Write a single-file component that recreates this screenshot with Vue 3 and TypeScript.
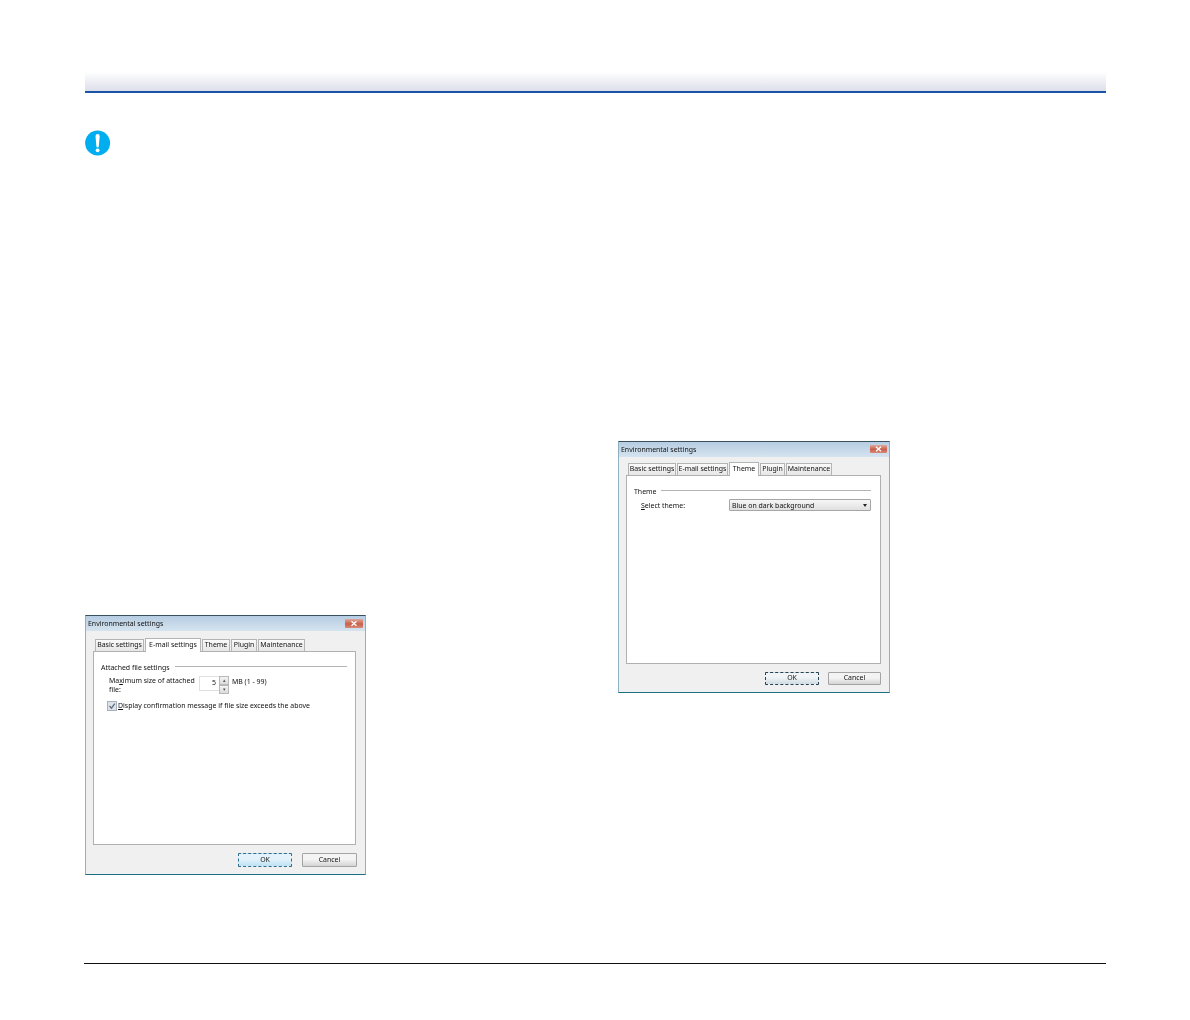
<script setup lang="ts">
interface Tab {
  label: string
  width: number
  active?: boolean
}

const emailTabs: Tab[] = [
  { label: 'Basic settings', width: 49 },
  { label: 'E-mail settings', width: 56, active: true },
  { label: 'Theme', width: 28 },
  { label: 'Plugin', width: 26 },
  { label: 'Maintenance', width: 47 }
]

const themeTabs: Tab[] = [
  { label: 'Basic settings', width: 48 },
  { label: 'E-mail settings', width: 51 },
  { label: 'Theme', width: 30, active: true },
  { label: 'Plugin', width: 25 },
  { label: 'Maintenance', width: 46 }
]
</script>

<template>
  <div class="page">
    <div class="top-band"></div>

    <div class="columns">
      <div class="col-left">
        <svg class="notice" viewBox="0 0 26 26" width="26" height="26">
          <circle cx="12.6" cy="13" r="12.5" fill="#00aeef" />
          <path d="M10.5 6.2a2.1 2.1 0 0 1 4.2 0l-.9 10a1.2 1.2 0 0 1-2.4 0z" fill="#fff" />
          <circle cx="12.6" cy="20.3" r="1.9" fill="#fff" />
        </svg>

        <div class="dialog dialog-email">
          <div class="titlebar">
            <span>Environmental settings</span>
            <span class="close">
              <svg viewBox="0 0 18 9" width="18" height="9"><path d="M6.5 2.2l5 4.6M11.5 2.2l-5 4.6" stroke="#fff" stroke-width="1.3" /></svg>
            </span>
          </div>
          <div class="body">
            <div class="tabs">
              <div
                v-for="tab in emailTabs"
                :key="tab.label"
                class="tab"
                :class="{ active: tab.active }"
                :style="{ width: tab.width + 'px' }"
              >{{ tab.label }}</div>
            </div>
            <div class="panel">
              <div class="group-title"><span>Attached file settings</span><i></i></div>
              <div class="size-row">
                <div class="size-label">Ma<u>x</u>imum size of attached<br />file:</div>
                <div class="spin-input">5</div>
                <div class="spin-btns"><b>▴</b><b>▾</b></div>
                <span class="unit">MB (1 - 99)</span>
              </div>
              <div class="check-row">
                <span class="check">
                  <svg viewBox="0 0 8 8" width="8" height="8"><path d="M1.5 4l2 2.2L6.7 1.6" fill="none" stroke="#5a6a80" stroke-width="1.2" /></svg>
                </span>
                <span><u>D</u>isplay confirmation message if file size exceeds the above</span>
              </div>
            </div>
            <div class="actions">
              <button class="btn ok">OK</button>
              <button class="btn">Cancel</button>
            </div>
          </div>
        </div>
      </div>

      <div class="col-right">
        <div class="dialog dialog-theme">
          <div class="titlebar">
            <span>Environmental settings</span>
            <span class="close">
              <svg viewBox="0 0 17 8" width="17" height="8"><path d="M6 1.7l5 4.6M11 1.7l-5 4.6" stroke="#fff" stroke-width="1.3" /></svg>
            </span>
          </div>
          <div class="body">
            <div class="tabs">
              <div
                v-for="tab in themeTabs"
                :key="tab.label"
                class="tab"
                :class="{ active: tab.active }"
                :style="{ width: tab.width + 'px' }"
              >{{ tab.label }}</div>
            </div>
            <div class="panel">
              <div class="group-title"><span>Theme</span><i></i></div>
              <div class="select-row">
                <span class="select-label"><u>S</u>elect theme:</span>
                <div class="select">
                  <span>Blue on dark background</span>
                  <em></em>
                </div>
              </div>
            </div>
            <div class="actions">
              <button class="btn ok dim">OK</button>
              <button class="btn">Cancel</button>
            </div>
          </div>
        </div>
      </div>
    </div>

    <div class="bottom-rule"></div>
  </div>
</template>

<style>
html,
body {
  margin: 0;
  background: #fff;
}
</style>

<style scoped>
.page {
  width: 1190px;
  height: 1020px;
  box-sizing: border-box;
  padding: 72px 84px 0 85px;
  background: #fff;
  font-family: "Noto Sans", "Liberation Sans", Arial, sans-serif;
}

.top-band {
  height: 19px;
  background: linear-gradient(#ffffff, #dcdfea);
  border-bottom: 2px solid #1c55a8;
}

.columns {
  display: grid;
  grid-template-columns: 533px 1fr;
  height: 870px;
}

.col-left {
  padding-top: 37px;
}

.notice {
  display: block;
  margin-bottom: 459px;
}

.col-right {
  padding-top: 348px;
}

.bottom-rule {
  height: 1px;
  margin-left: -1px;
  background: #111;
}

/* dialog window */
.dialog {
  box-sizing: border-box;
  display: flex;
  flex-direction: column;
  border: 1px solid #8fb0c0;
  border-top-color: #39505f;
  border-bottom-color: #1c6f80;
  font-size: 6.95px;
  color: #111;
  filter: blur(0.3px);
}

.dialog-email {
  width: 281px;
  height: 260px;
}

.dialog-theme {
  width: 272px;
  height: 252px;
}

.titlebar {
  display: flex;
  align-items: center;
  justify-content: space-between;
  height: 15px;
  flex: none;
  padding: 0 2px 1px 2px;
  box-sizing: border-box;
  background: linear-gradient(#b6cde2, #d5e3ef);
  color: #111;
}

.close {
  display: flex;
  align-self: flex-start;
  margin-top: 3px;
  border-radius: 1px;
  background: linear-gradient(#e0a89c, #c8604c 55%, #d88a78);
}

.body {
  flex: 1;
  display: flex;
  flex-direction: column;
  background: #f0f0f0;
}

.dialog-email .body {
  padding: 0 9px 0 7px;
}

.dialog-theme .body {
  padding: 0 8px 0 7px;
}

.tabs {
  display: flex;
  align-items: flex-end;
  gap: 1px;
  flex: none;
  height: 20px;
  padding-left: 2px;
}

.dialog-theme .tabs {
  height: 18px;
}

.tab {
  box-sizing: border-box;
  height: 12px;
  line-height: 10px;
  text-align: center;
  white-space: nowrap;
  border: 1px solid #b4b4b4;
  border-bottom: none;
  background: linear-gradient(#fafafa, #e6e6e6);
}

.tab.active {
  height: 14px;
  margin-bottom: -1px;
  position: relative;
  z-index: 1;
  line-height: 11px;
  background: #fff;
  border-color: #b4b4b4;
}

.panel {
  box-sizing: border-box;
  flex: 1;
  padding: 10px 8px 0 7px;
  background: #fff;
  border: 1px solid #b0b0b0;
}

.dialog-theme .panel {
  padding-right: 9px;
}

.group-title {
  display: flex;
  align-items: center;
  gap: 5px;
  height: 10px;
}

.group-title i {
  flex: 1;
  height: 1px;
  margin-top: -2px;
  background: #b4b4b4;
}

.size-row {
  display: flex;
  align-items: flex-start;
  margin: 5px 0 0 8px;
  line-height: 8.5px;
}

.size-label {
  width: 90px;
}

.spin-input {
  box-sizing: border-box;
  width: 20px;
  height: 15px;
  margin-top: -1px;
  padding: 2px 3px 0 0;
  text-align: right;
  border: 1px solid #e0e0e0;
  border-right: none;
}

.spin-btns {
  display: flex;
  flex-direction: column;
  width: 10px;
  margin-top: -1px;
  margin-right: 3px;
}

.spin-btns b {
  height: 7px;
  font-size: 5px;
  font-weight: normal;
  line-height: 7px;
  text-align: center;
  color: #555;
  border: 0.5px solid #b8b8b8;
  background: linear-gradient(#f4f4f4, #dcdcdc);
}

.unit {
  margin-top: 1px;
}

.check-row {
  display: flex;
  align-items: center;
  gap: 2px;
  margin: 7px 0 0 7px;
}

.check {
  display: flex;
  width: 8px;
  height: 8px;
  background: #dde1e8;
  outline: 0.5px solid #a8b0bc;
}

.select-row {
  display: flex;
  align-items: center;
  justify-content: space-between;
  margin: 3px 0 0 7px;
}

.select {
  box-sizing: border-box;
  display: flex;
  align-items: center;
  justify-content: space-between;
  width: 142px;
  height: 12px;
  padding: 0 3px 0 2px;
  border: 1px solid #a6a6a6;
  border-radius: 1px;
  background: linear-gradient(#f6f6f6, #e0e0e0);
}

.select em {
  width: 0;
  height: 0;
  border-left: 2.5px solid transparent;
  border-right: 2.5px solid transparent;
  border-top: 3px solid #222;
}

.actions {
  display: flex;
  justify-content: flex-end;
  gap: 10px;
  flex: none;
  height: 29px;
  padding-top: 8px;
  margin-right: -1px;
  box-sizing: border-box;
}

.dialog-theme .actions {
  height: 28px;
  gap: 9px;
  margin-right: 0;
}

.btn {
  box-sizing: border-box;
  width: 55px;
  height: 14px;
  padding: 0 0 2px;
  font: inherit;
  line-height: 9px;
  color: #111;
  border: 1px solid #a4a4a4;
  border-radius: 1px;
  background: linear-gradient(#f4f4f4 45%, #d4d4d4);
}

.btn.ok {
  width: 54px;
  border: 1px dashed #2f6f88;
  background: linear-gradient(#e4f3fb 40%, #bfe1f3);
}

.btn.ok.dim {
  border-color: #24424f;
  background: linear-gradient(#f0f4f6 40%, #d0dce2);
}

.dialog-theme .btn {
  width: 53px;
  height: 13px;
}

.dialog-theme .btn.ok {
  width: 54px;
}
</style>
